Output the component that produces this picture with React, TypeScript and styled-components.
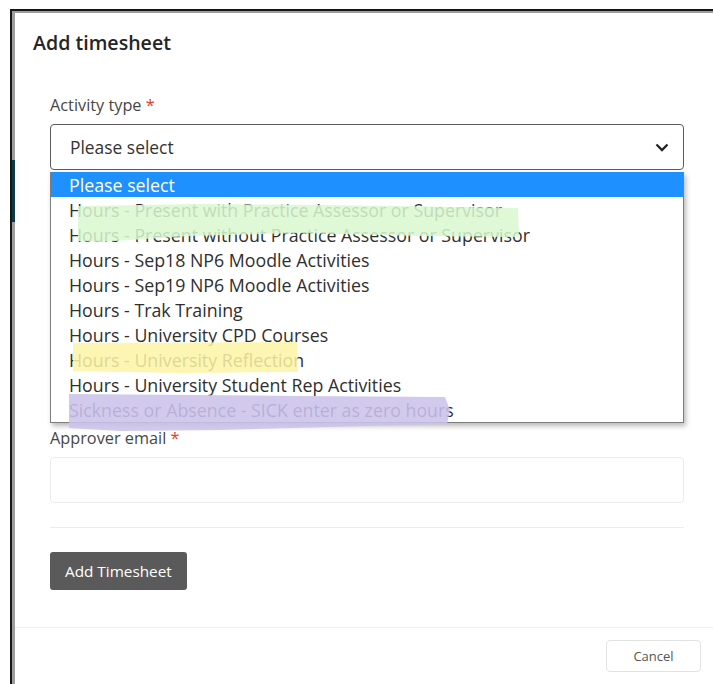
import React, { useState } from "react"
import styled, { createGlobalStyle } from "styled-components"

const GlobalStyle = createGlobalStyle`
  html, body {
    margin: 0;
    padding: 0;
    background: #fff;
  }
  body {
    font-family: "Open Sans", "Noto Sans", sans-serif;
    color: #333;
  }
  * {
    box-sizing: border-box;
  }
`

const Page = styled.div`
  position: relative;
  width: 713px;
  height: 684px;
  padding: 9px 0 0 10px;
  overflow: hidden;
`
const Frame = styled.div`
  position: relative;
  height: 100%;
  border-top: 2px solid #161616;
  border-left: 2px solid #161616;
`
const BackdropStrip = styled.div`
  position: absolute;
  left: 0;
  top: 149px;
  width: 3px;
  height: 62px;
  background: #0b3b47;
`
const Modal = styled.div`
  height: 100%;
  display: flex;
  flex-direction: column;
  background: #fff;
  border-top: 2px solid #9d9d9d;
  border-left: 3px solid #9d9d9d;
`
const Header = styled.div`
  padding: 17px 18px 0;
`
const Title = styled.h2`
  margin: 0;
  font-size: 19.6px;
  line-height: 26px;
  font-weight: 600;
  color: #252525;
`
const Body = styled.div`
  padding: 38px 29px 37px 35px;
`
const Fields = styled.div`
  display: flex;
  flex-direction: column;
  gap: 4px;
`
const Field = styled.div`
  display: flex;
  flex-direction: column;
  gap: 8px;
`
const Label = styled.label`
  font-size: 16.3px;
  line-height: 22px;
  color: #474747;
`
const Required = styled.span`
  color: #e53935;
`
const SelectWrap = styled.div`
  display: flex;
  flex-direction: column;
  gap: 2px;
`
const SelectBox = styled.div<{ $open?: boolean }>`
  height: 46px;
  display: flex;
  align-items: center;
  justify-content: space-between;
  padding: 0 14px 0 19px;
  border: 1px solid ${p => (p.$open ? "#5a5a5a" : "#e6e6e6")};
  border-radius: 4px;
  font-size: 17.4px;
  color: #333;
  cursor: pointer;
`
const TextInput = styled.input`
  height: 46px;
  padding: 0 19px;
  border: 1px solid #ebebeb;
  border-radius: 4px;
  font-family: inherit;
  font-size: 16px;
  outline: none;
`
const OptionList = styled.ul`
  margin: 0;
  padding: 0;
  list-style: none;
  background: #fff;
  border: 1px solid #7d7d7d;
  border-top: none;
  box-shadow: 2px 3px 5px rgba(0, 0, 0, 0.28);
`
const OptionItem = styled.li<{ $active?: boolean }>`
  height: 25px;
  line-height: 26px;
  padding-left: 18px;
  font-size: 17.8px;
  white-space: nowrap;
  color: ${p => (p.$active ? "#fff" : "#2f2f2f")};
  background: ${p => (p.$active ? "#1e90ff" : "transparent")};
  cursor: default;
`
const Divider = styled.hr`
  margin: 24px 0;
  border: none;
  border-top: 1px solid #ececec;
`
const PrimaryButton = styled.button`
  height: 38px;
  padding: 0 15px;
  border: none;
  border-radius: 3px;
  background: #5a5a5a;
  color: #fff;
  font-family: inherit;
  font-size: 15.3px;
  cursor: pointer;
`
const Footer = styled.div`
  display: flex;
  justify-content: flex-end;
  padding: 12px 12px 0;
  border-top: 1px solid #efefef;
`
const GhostButton = styled.button`
  width: 95px;
  height: 32px;
  border: 1px solid #e2e2e2;
  border-radius: 4px;
  background: #fff;
  color: #555;
  font-family: inherit;
  font-size: 13px;
`
const Markup = styled.svg`
  position: absolute;
  left: 0;
  top: 0;
  pointer-events: none;
  z-index: 5;
`

const activityTypes = [
  "Please select",
  "Hours - Present with Practice Assessor or Supervisor",
  "Hours - Present without Practice Assessor or Supervisor",
  "Hours - Sep18 NP6 Moodle Activities",
  "Hours - Sep19 NP6 Moodle Activities",
  "Hours - Trak Training",
  "Hours - University CPD Courses",
  "Hours - University Reflection",
  "Hours - University Student Rep Activities",
  "Sickness or Absence - SICK enter as zero hours",
]

function Chevron() {
  return (
    <svg width="14" height="9" viewBox="0 0 14 9">
      <path d="M1.5 1.5 L7 7 L12.5 1.5" fill="none" stroke="#222" strokeWidth="2.3" />
    </svg>
  )
}

// highlighter strokes drawn over the open list
function Highlights() {
  return (
    <Markup width="713" height="684" viewBox="0 0 713 684">
      <path
        d="M78 206 L200 204 L330 205 L518 208 L519 237 L420 236 L300 233 L190 236 L100 242 L78 241 Z"
        fill="#d9f8d0"
        fillOpacity="0.85"
      />
      <path d="M73 343 L297 342 L298 372 L180 373 L73 371 Z" fill="#fbf5a4" fillOpacity="0.85" />
      <path
        d="M69 394 L300 396 L445 397 L450 410 L447 424 L400 425 L330 427 L220 430 L120 431 L69 428 Z"
        fill="#cbc3ea"
        fillOpacity="0.88"
      />
    </Markup>
  )
}

export default function App() {
  const [open, setOpen] = useState(true)
  const [selected, setSelected] = useState(0)

  return (
    <>
      <GlobalStyle />
      <Page>
        <Frame>
          <BackdropStrip />
          <Modal>
            <Header>
              <Title>Add timesheet</Title>
            </Header>
            <Body>
              <Fields>
                <Field>
                  <Label>
                    Activity type <Required>*</Required>
                  </Label>
                  <SelectWrap>
                    <SelectBox $open={open} onClick={() => setOpen(!open)}>
                      <span>{activityTypes[selected]}</span>
                      <Chevron />
                    </SelectBox>
                    {open && (
                      <OptionList>
                        {activityTypes.map((t, i) => (
                          <OptionItem
                            key={t}
                            $active={i === selected}
                            onClick={() => {
                              setSelected(i)
                              setOpen(false)
                            }}
                          >
                            {t}
                          </OptionItem>
                        ))}
                      </OptionList>
                    )}
                  </SelectWrap>
                </Field>
                <Field>
                  <Label>
                    Approver email <Required>*</Required>
                  </Label>
                  <TextInput type="email" />
                </Field>
              </Fields>
              <Divider />
              <PrimaryButton>Add Timesheet</PrimaryButton>
            </Body>
            <Footer>
              <GhostButton>Cancel</GhostButton>
            </Footer>
          </Modal>
        </Frame>
        {open && <Highlights />}
      </Page>
    </>
  )
}
